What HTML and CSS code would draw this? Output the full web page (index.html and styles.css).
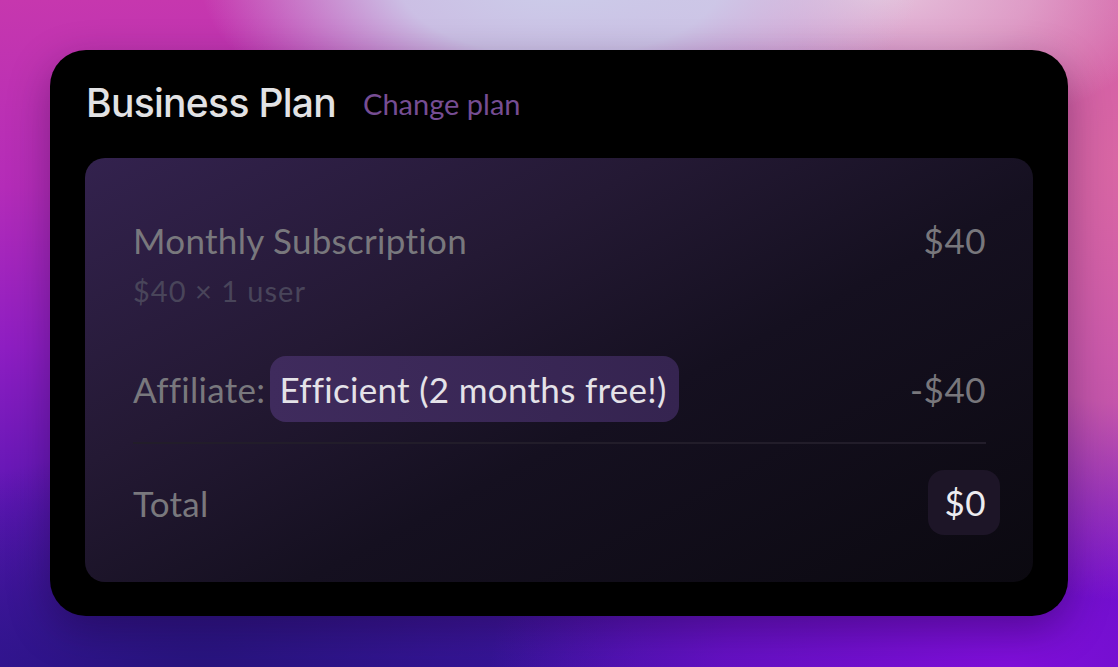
FILE: index.html
```html
<!DOCTYPE html>
<html>
<head>
<meta charset="utf-8">
<link rel="stylesheet" href="styles.css">
</head>
<body>
<div class="stage">
  <section class="card">
    <header class="card-head">
      <h1 class="title">Business Plan</h1>
      <a class="change" href="#">Change plan</a>
    </header>
    <div class="panel">
      <div class="row row-sub">
        <div class="label-group">
          <div class="label">Monthly Subscription</div>
          <div class="sublabel">$40 × 1 user</div>
        </div>
        <div class="amount">$40</div>
      </div>
      <div class="row row-aff">
        <div class="label">Affiliate:<span class="pill">Efficient (2 months free!)</span></div>
        <div class="amount">-$40</div>
      </div>
      <div class="divider"></div>
      <div class="row row-total">
        <div class="label">Total</div>
        <div class="total-amount">$0</div>
      </div>
    </div>
  </section>
</div>
</body>
</html>
```

FILE: styles.css
```css
html, body {
  margin: 0;
  padding: 0;
  width: 1118px;
  height: 667px;
  overflow: hidden;
}

body {
  background:
    radial-gradient(ellipse 360px 170px at 560px -20px, rgba(204, 206, 234, 1) 0%, rgba(204, 206, 234, 0.9) 45%, rgba(204, 206, 234, 0) 100%),
    radial-gradient(ellipse 300px 150px at 880px -10px, rgba(230, 198, 220, 1) 0%, rgba(230, 198, 220, 0.6) 50%, rgba(230, 198, 220, 0) 100%),
    radial-gradient(ellipse 330px 440px at 1118px 160px, rgba(216, 102, 164, 1) 0%, rgba(214, 100, 166, 0.8) 55%, rgba(214, 100, 166, 0) 100%),
    radial-gradient(ellipse 520px 270px at 1010px 667px, rgba(128, 14, 218, 1) 0%, rgba(128, 14, 218, 0.6) 55%, rgba(128, 14, 218, 0) 100%),
    radial-gradient(ellipse 440px 220px at 200px 667px, rgba(40, 20, 126, 1) 0%, rgba(40, 20, 126, 0) 100%),
    linear-gradient(180deg, #c637ae 0%, #b42cb8 28%, #8e1ec2 52%, #5e16b4 76%, #3a14a0 100%);
  font-family: "Lato", "Noto Sans", sans-serif;
}

.stage {
  padding: 50px 50px 51px 50px;
}

.card {
  width: 1018px;
  height: 566px;
  box-sizing: border-box;
  background: #000;
  border-radius: 36px;
  padding: 25px 35px 34px 35px;
  display: flex;
  flex-direction: column;
  box-shadow: 0 14px 40px rgba(20, 0, 40, 0.35);
}

.card-head {
  display: flex;
  align-items: center;
  gap: 27px;
  height: 56px;
  margin-bottom: 27px;
  padding-left: 1px;
}

.title {
  margin: 0;
  font-family: "Inter", "Roboto", sans-serif;
  font-weight: 500;
  font-size: 39px;
  letter-spacing: -0.7px;
  line-height: 56px;
  color: #e2e2e4;
}

.change {
  font-family: "Lato", sans-serif;
  font-size: 29px;
  color: #764d93;
  text-decoration: none;
  line-height: 40px;
  margin-top: 2px;
}

.panel {
  flex: 1;
  border-radius: 20px;
  background: linear-gradient(152deg, #33224e 0%, #241934 33%, #151020 58%, #0b0910 100%);
  padding: 62px 47px 0 48px;
  display: flex;
  flex-direction: column;
}

.row {
  display: flex;
  justify-content: space-between;
  align-items: center;
}

.row-sub {
  align-items: flex-start;
}

.label {
  font-size: 35px;
  letter-spacing: 0.3px;
  color: #79787d;
  line-height: 40px;
  display: flex;
  align-items: center;
}

.sublabel {
  font-size: 29px;
  letter-spacing: 1px;
  color: #49455a;
  line-height: 40px;
  margin-top: 11px;
}

.amount {
  font-size: 35px;
  letter-spacing: 0.5px;
  color: #78777c;
  line-height: 40px;
}

.row-aff {
  margin-top: 45px;
}

.pill {
  display: inline-block;
  margin-left: 5px;
  padding: 13px 12px 13px 9px;
  background: linear-gradient(90deg, #3f2b5d 0%, #352450 100%);
  border-radius: 16px;
  color: #e4e2e8;
  line-height: 40px;
}

.divider {
  height: 2px;
  background: #221d2a;
  margin-top: 20px;
}

.row-total {
  margin-top: 26px;
  margin-right: -14px;
}

.total-amount {
  font-size: 35px;
  letter-spacing: 0.5px;
  color: #ececf0;
  line-height: 40px;
  padding: 12px 14px 13px 16px;
  background: #1d1527;
  border-radius: 16px;
}
```
